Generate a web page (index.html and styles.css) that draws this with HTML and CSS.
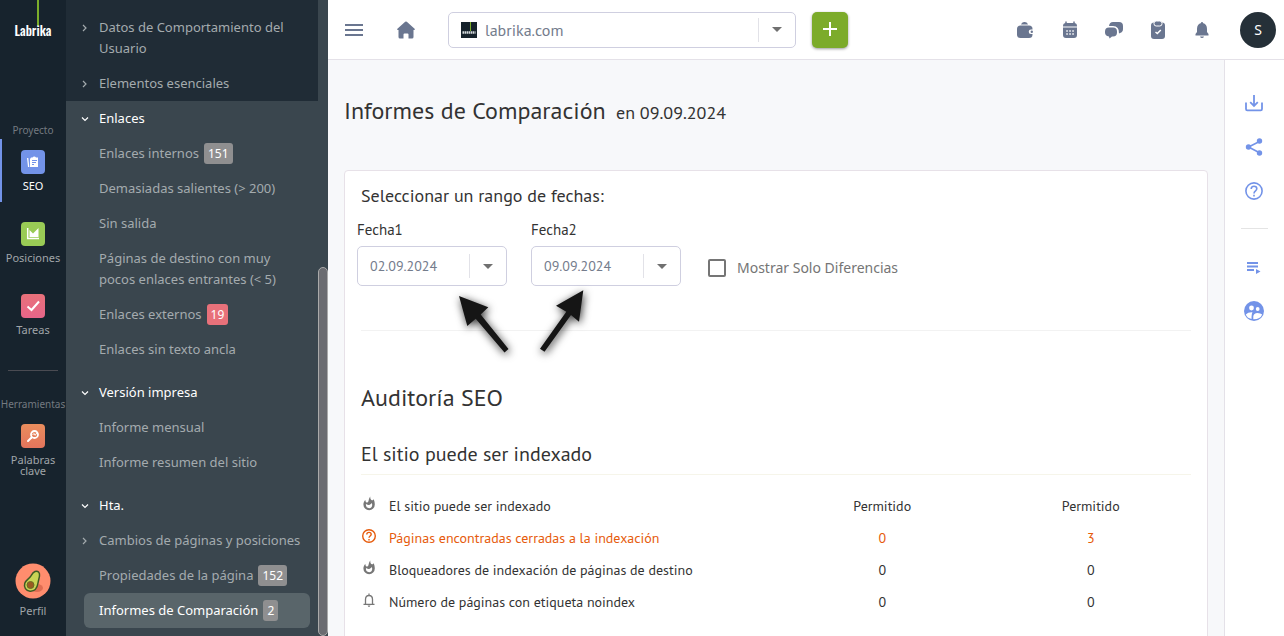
FILE: index.html
```html
<!DOCTYPE html>
<html lang="es">
<head>
<meta charset="utf-8">
<title>Labrika - Informes de Comparación</title>
<link rel="stylesheet" href="styles.css">
</head>
<body>
<div class="app">
  <nav class="rail" aria-label="Secciones">
    <a class="logo" href="#">Labrika</a>
    <span class="rail-title">Proyecto</span>
    <a class="rail-item active" href="#">
      <span class="tile blue"><svg viewBox="0 0 24 24" width="24" height="24"><path fill="#fff" d="M10 7.500h1.500a2 2 0 0 1 3.500 0h2V17h-8V9zM6 8h1.300l1 9H7z"/><path stroke="#7393e8" d="M11 10.500h5M11 12.500h4M11 14.500h2" fill="none"/></svg></span>
      <span>SEO</span>
    </a>
    <a class="rail-item" href="#">
      <span class="tile green"><svg viewBox="0 0 24 24" width="24" height="24"><path fill="none" stroke="#fff" stroke-width="1.500" d="M6.700 6v10.500H18"/><path fill="#fff" d="M8.500 15V8l3.500 3.500L17.500 6v9z"/></svg></span>
      <span>Posiciones</span>
    </a>
    <a class="rail-item" href="#">
      <span class="tile pink"><svg viewBox="0 0 24 24" width="24" height="24"><path fill="none" stroke="#fff" stroke-width="2" d="M6.500 12.500l4 3.500 7.500-8.500"/></svg></span>
      <span>Tareas</span>
    </a>
    <hr class="rail-line">
    <span class="rail-title">Herramientas</span>
    <a class="rail-item tools" href="#">
      <span class="tile orange"><svg viewBox="0 0 24 24" width="24" height="24"><circle cx="13.500" cy="10.500" r="3.500" fill="none" stroke="#fff" stroke-width="1.800"/><path fill="none" stroke="#fff" stroke-width="2" stroke-linecap="round" d="M10.500 13.500L7 17"/><path fill="none" stroke="#fff" d="M11.500 11l1.500-1.500 1.200 1.800 2-3"/></svg></span>
      <span>Palabras clave</span>
    </a>
    <a class="rail-item profile" href="#">
      <svg class="avocado" viewBox="0 0 36 36" width="36" height="36"><circle cx="18" cy="18" r="17.500" fill="#ff8d6e"/><ellipse cx="22" cy="25" rx="6" ry="4" fill="#e06d52"/><path fill="#c9d455" stroke="#3f5a24" stroke-width="1.500" d="M20 8.500c3-1 5 1 4.500 4.500-.5 3-1 4-1.500 7-1 6-4 8.500-8 8.200-4-.4-6.500-4-5.200-8 1.200-3.500 4.200-4 6-7 1-1.800 2-4 4.200-4.700z"/><circle cx="15.500" cy="22" r="3.500" fill="#9a5a23" stroke="#6c6a24"/></svg>
      <span>Perfil</span>
    </a>
  </nav>

  <aside class="sidebar">
    <div class="menu">
      <section class="group dark">
        <a class="item" href="#"><svg class="chev" viewBox="0 0 8 8"><path d="M2 1L5 4 2 7"/></svg>Datos de Comportamiento del Usuario</a>
        <a class="item" href="#"><svg class="chev" viewBox="0 0 8 8"><path d="M2 1L5 4 2 7"/></svg>Elementos esenciales</a>
      </section>
      <section class="group">
        <a class="item head" href="#"><svg class="chev" viewBox="0 0 8 8"><path d="M1 2.500L4 5.500 7 2.500"/></svg>Enlaces</a>
        <a class="item" href="#">Enlaces internos<span class="count">151</span></a>
        <a class="item" href="#">Demasiadas salientes (&gt; 200)</a>
        <a class="item" href="#">Sin salida</a>
        <a class="item" href="#">Páginas de destino con muy pocos enlaces entrantes (&lt; 5)</a>
        <a class="item" href="#">Enlaces externos<span class="count red">19</span></a>
        <a class="item" href="#">Enlaces sin texto ancla</a>
      </section>
      <section class="group">
        <a class="item head" href="#"><svg class="chev" viewBox="0 0 8 8"><path d="M1 2.500L4 5.500 7 2.500"/></svg>Versión impresa</a>
        <a class="item" href="#">Informe mensual</a>
        <a class="item" href="#">Informe resumen del sitio</a>
      </section>
      <section class="group">
        <a class="item head" href="#"><svg class="chev" viewBox="0 0 8 8"><path d="M1 2.500L4 5.500 7 2.500"/></svg>Hta.</a>
        <a class="item" href="#"><svg class="chev" viewBox="0 0 8 8"><path d="M2 1L5 4 2 7"/></svg>Cambios de páginas y posiciones</a>
        <a class="item" href="#">Propiedades de la página<span class="count">152</span></a>
        <a class="item current" href="#">Informes de Comparación<span class="count">2</span></a>
      </section>
    </div>
    <div class="scroll"><div class="thumb"></div></div>
  </aside>

  <div class="page">
    <header class="topbar">
      <button class="icon-btn menu-btn" aria-label="Menú"><svg viewBox="0 0 20 14" width="20" height="14"><path stroke="#6a7690" stroke-width="2" d="M1 2h18M1 7h18M1 12h18"/></svg></button>
      <button class="icon-btn home-btn" aria-label="Inicio"><svg viewBox="0 0 20 20" width="20" height="20"><path fill="#6a7690" d="M9.200 1.800q.8-.8 1.600 0l7.800 7q.8 1-.3 1.200H17.500V17q0 1.500-1.500 1.500h-3.500v-4q0-1-1-1h-3q-1 0-1 1v4H4Q2.500 18.500 2.500 17v-7H1.700q-1.100-.2-.3-1.200z"/></svg></button>
      <div class="select site">
        <svg class="favicon" viewBox="0 0 16 16" width="16" height="16"><path fill="#16222b" d="M0 0h16v16H0z"/><path stroke="#7cae2b" d="M9.500 0v9"/><path stroke="#d5dadd" stroke-width="2.500" stroke-dasharray="1.500 .5" d="M1.500 10.500h13"/></svg>
        <select aria-label="Sitio"><option>labrika.com</option></select>
        <svg class="caret" viewBox="0 0 10 5"><path d="M0 0h10L5 5z"/></svg>
      </div>
      <button class="add" aria-label="Añadir"><svg viewBox="0 0 16 16" width="16" height="16"><path stroke="#fff" stroke-width="2" d="M8 1v14M1 8h14"/></svg></button>
      <div class="actions">
        <button class="icon-btn" aria-label="Saldo"><svg viewBox="0 0 20 20" width="20" height="20"><path fill="#6a7690" d="M5 4.500q.7-2.500 3-2.500h1q2.500 0 3 2.500z"/><rect x="1" y="5.500" width="15.500" height="12.500" rx="3.500" fill="#6a7690"/><path fill="#fff" d="M17 9.500h-2a2 2 0 0 0 0 4.500h2z"/><circle cx="15.800" cy="11.800" r="1.200" fill="#6a7690"/></svg></button>
        <button class="icon-btn" aria-label="Calendario"><svg viewBox="0 0 20 20" width="20" height="20"><path stroke="#6a7690" stroke-width="1.500" d="M6 1.500v3M14 1.500v3"/><path fill="#6a7690" d="M3 6.500V6q0-3 3-3h8q3 0 3 3v.5zM3 7.500h14V15q0 3-3 3H6q-3 0-3-3z"/><path stroke="#fff" stroke-width="1.500" stroke-dasharray="1.500 1.500" d="M6.300 11h8M6.300 14h8"/></svg></button>
        <button class="icon-btn" aria-label="Mensajes"><svg viewBox="0 0 20 20" width="20" height="20"><path fill="#6a7690" d="M5 6q.5-4 4-4h6q4 0 4 4v3q0 3-3 4l-1 .5q.3-7.500-6-7.500z"/><path fill="#6a7690" d="M5 7.500h4q4 0 4 4v1q0 4-4 4H8l-2.500 2-.5-2q-4-.5-4-4v-1q0-4 4-4z"/></svg></button>
        <button class="icon-btn" aria-label="Tareas"><svg viewBox="0 0 20 20" width="20" height="20"><rect x="3" y="2.500" width="14" height="16.500" rx="3" fill="#6a7690"/><rect x="6" y="1" width="8" height="5" rx="2.200" fill="#6a7690" stroke="#fff"/><path fill="none" stroke="#fff" stroke-width="1.500" d="M7.500 12l1.800 1.500 3.500-3.500"/></svg></button>
        <button class="icon-btn" aria-label="Avisos"><svg viewBox="0 0 20 20" width="20" height="20"><path fill="#6a7690" d="M9.200 2h1.600v1Q15 4 15 9v3l1.500 2v1.500h-13V14L5 12V9q0-5 4.200-6zM8 16.500h4q-.5 1.500-2 1.500t-2-1.500z"/></svg></button>
        <button class="user">S</button>
      </div>
    </header>
    <div class="body">
      <main class="content">
        <h1 class="title">Informes de Comparación <small>en 09.09.2024</small></h1>
        <div class="panel">
          <form class="filters">
            <h2 class="range">Seleccionar un rango de fechas:</h2>
            <div class="fields">
              <div class="field">
                <label for="f1">Fecha1</label>
                <div class="select date"><select id="f1"><option>02.09.2024</option></select><svg class="caret" viewBox="0 0 10 5"><path d="M0 0h10L5 5z"/></svg></div>
              </div>
              <div class="field">
                <label for="f2">Fecha2</label>
                <div class="select date"><select id="f2"><option>09.09.2024</option></select><svg class="caret" viewBox="0 0 10 5"><path d="M0 0h10L5 5z"/></svg></div>
              </div>
              <label class="check"><input type="checkbox">Mostrar Solo Diferencias</label>
            </div>
            <svg class="arrows" viewBox="440 280 160 90" width="160" height="90" aria-hidden="true"><path d="M459 296l29.300 11.300-7.600 7.200L508.500 349l-4 3.500-28.800-33.800-8.400 7.300zM583.300 290.300L579 321.700l-8-6.700-26.500 36.700-4.500-3 26.300-37-10.300-6z"/></svg>
          </form>
          <h2 class="audit">Auditoría SEO</h2>
          <h3 class="block-title">El sitio puede ser indexado</h3>
          <table class="report">
            <colgroup><col class="c-icon"><col><col class="c-val"><col class="c-val"></colgroup>
            <tbody>
            <tr><td class="ic"><svg viewBox="0 0 16 16"><path fill="#777" fill-rule="evenodd" d="M9.300.5C9 3 10 4 11 4.300 11.800 4.500 12.400 3.800 12.400 3 13.400 4.500 13.800 6.500 13.800 8.500a5.700 5.700 0 0 1-11.400 0c0-2 .8-3.600 2-4.600 0 1.800.8 2.600 1.800 2.600C8 6.500 7.200 3 9.300.5zM10.800 7C9.500 8.500 8.500 9 7.500 9 6.300 9 5.500 8.500 5 7.800c-.5 2.500.8 4.400 3.200 4.400 2.700 0 3.600-2.700 2.600-5.200z"/></svg></td><th scope="row">El sitio puede ser indexado</th><td>Permitido</td><td>Permitido</td></tr>
            <tr class="warn"><td class="ic"><svg viewBox="0 0 16 16"><circle cx="8" cy="8" r="6.300" fill="none" stroke="#e65b0c" stroke-width="1.400"/><path fill="none" stroke="#e65b0c" stroke-width="1.400" d="M5.800 6.500C5.800 3.600 10.200 3.700 10.200 6.300 10.200 8 8 8 8 9.800M8 11v1.400"/></svg></td><th scope="row">Páginas encontradas cerradas a la indexación</th><td>0</td><td>3</td></tr>
            <tr><td class="ic"><svg viewBox="0 0 16 16"><path fill="#777" fill-rule="evenodd" d="M9.300.5C9 3 10 4 11 4.300 11.800 4.500 12.400 3.800 12.400 3 13.400 4.500 13.800 6.500 13.800 8.500a5.700 5.700 0 0 1-11.400 0c0-2 .8-3.600 2-4.600 0 1.800.8 2.600 1.800 2.600C8 6.500 7.200 3 9.300.5zM10.800 7C9.500 8.500 8.500 9 7.500 9 6.300 9 5.500 8.500 5 7.800c-.5 2.500.8 4.400 3.200 4.400 2.700 0 3.600-2.700 2.600-5.200z"/></svg></td><th scope="row">Bloqueadores de indexación de páginas de destino</th><td>0</td><td>0</td></tr>
            <tr><td class="ic"><svg viewBox="0 0 16 16"><path fill="none" stroke="#777" stroke-width="1.300" d="M4.500 12V7.500q0-4 3.500-4t3.500 4V12M2.500 12.300h11M8 3.500V1.500"/><path fill="#777" d="M6.600 13.500h2.800q-.3 1.400-1.400 1.400t-1.400-1.400z"/></svg></td><th scope="row">Número de páginas con etiqueta noindex</th><td>0</td><td>0</td></tr>
            </tbody>
          </table>
        </div>
      </main>
      <aside class="tools-bar">
        <button class="icon-btn" aria-label="Descargar"><svg viewBox="0 0 20 20" width="20" height="20"><path fill="none" stroke="#7393e8" stroke-width="1.800" d="M2 9.500V16q0 1.300 1.300 1.300h13.400q1.300 0 1.300-1.300V9.500M10 2v11M6.200 9.200l3.800 3.800 3.800-3.800"/></svg></button>
        <button class="icon-btn" aria-label="Compartir"><svg viewBox="0 0 20 20" width="20" height="20"><path fill="none" stroke="#7393e8" stroke-width="1.600" d="M15.500 4.500L4.500 10l11 5.800"/><g fill="#7393e8"><circle cx="15.500" cy="4" r="2.700"/><circle cx="4.500" cy="10" r="2.700"/><circle cx="15.500" cy="16" r="2.700"/></g></svg></button>
        <button class="icon-btn" aria-label="Ayuda"><svg viewBox="0 0 20 20" width="20" height="20"><circle cx="10" cy="10" r="8.100" fill="none" stroke="#7393e8" stroke-width="1.600"/><path fill="none" stroke="#7393e8" stroke-width="1.600" d="M7.200 8C7.200 4.300 12.800 4.500 12.800 7.800 12.800 9.900 10 9.800 10 12.400M10 13.700v1.700"/></svg></button>
        <hr>
        <button class="icon-btn" aria-label="Lista"><svg viewBox="0 0 20 20" width="20" height="20"><path stroke="#7393e8" stroke-width="1.800" d="M3 6h11M3 9.500h11M3 13h7"/><path fill="#7393e8" d="M12 12l4.500 2.500L12 17z"/></svg></button>
        <button class="icon-btn" aria-label="Equipo"><svg viewBox="0 0 20 20" width="20" height="20"><circle cx="10" cy="10" r="10" fill="#7393e8"/><g fill="#fff"><circle cx="7.500" cy="7" r="2.400"/><circle cx="13.700" cy="8" r="1.900"/><path d="M1.800 13.500Q4 11 8.500 11.300 7.500 13 7.500 18 3 17 1.800 13.500zM9.300 18.300v-3q.3-3 4.200-3.300 3 0 4.700 1.500-2 5-8.900 4.800z"/></g></svg></button>
      </aside>
    </div>
  </div>
</div>
</body>
</html>
```
FILE: styles.css
```css
* { box-sizing: border-box; }
body { margin: 0; background: #f7f8fa; color: #333; font: 13px/21px "Noto Sans", sans-serif; }
a { color: inherit; text-decoration: none; }
button { font: inherit; border: 0; background: none; padding: 0; cursor: pointer; }
h1, h2, h3 { margin: 0; font-weight: 400; }
svg { display: block; flex: none; }
.app { display: flex; height: 100vh; overflow: hidden; }

.rail { width: 66px; flex: none; background: #17232d; color: #a0a5a9; display: flex; flex-direction: column; align-items: center; font-size: 11px; line-height: 16px; padding-bottom: 17px; }
.logo { width: 44px; height: 44px; padding-top: 22px; background: linear-gradient(#7cae2b, #7cae2b) 26px 0 / 2px 26px no-repeat; color: #fff; font: 500 13px/16px Oswald, "PT Sans Narrow", "Liberation Sans Narrow", Roboto, sans-serif; text-align: center; margin-bottom: 78px; }
.rail-title { color: #747a80; font-size: 10px; margin-bottom: 1px; }
.rail-item { width: 100%; height: 63px; padding-top: 11px; display: flex; flex-direction: column; align-items: center; gap: 4px; margin-bottom: 9px; text-align: center; }
.rail-item.active { color: #fff; box-shadow: inset 2px 0 #7393e8; }
.rail-item.tools { line-height: 11px; gap: 6px; }
.tile { width: 24px; height: 24px; border-radius: 4px; }
.blue { background: #7393e8; }
.green { background: #99cb55; }
.pink { background: linear-gradient(#e8717a, #e76589); }
.orange { background: linear-gradient(#e98d5d, #e3745c); }
.rail-line { width: 50px; margin: 15px 0 25px; border: 0; border-top: 1px solid #4a4b52; }
.profile { margin: auto 0 0; height: auto; padding: 0; }

.sidebar { width: 262px; flex: none; display: flex; background: #3a464e; color: #a4abae; }
.menu { flex: 1; min-width: 0; }
.group { padding: 0 8px 8px 18px; }
.group.dark { background: #202c36; padding-top: 10px; padding-bottom: 0; }
.item { display: block; position: relative; padding: 7px 6px 7px 15px; border-radius: 6px; }
.head, .current { color: #fff; }
.current { background: #59656a; }
.chev { position: absolute; left: -3px; top: 14px; width: 8px; height: 8px; fill: none; stroke: currentColor; stroke-width: 1.2; }
.count { display: inline-block; margin-left: 5px; padding: 0 4px; border-radius: 3px; background: #8f8f90; color: #fff; font-size: 12px; }
.count.red { background: #e8717a; }
.scroll { width: 10px; background: #3a464e; padding-top: 267px; display: flex; }
.thumb { flex: 1; border: 1px solid #aaa; border-radius: 5px; background: #6b6c71; }

.page { flex: 1; min-width: 0; display: flex; flex-direction: column; }
.topbar { height: 60px; flex: none; display: flex; align-items: center; padding: 0 8px 0 16px; background: #fff; border-bottom: 1px solid #e4e1e8; }
.icon-btn { display: flex; justify-content: center; align-items: center; width: 20px; height: 20px; }
.home-btn { margin: 0 32px; }
.select { position: relative; display: flex; align-items: center; border: 1px solid #cfcfe0; border-radius: 5px; background: #fff; }
.select select { appearance: none; border: 0; outline: 0; background: none; width: 100%; height: 100%; color: #747c8c; font: 14px/20px "PT Sans", "Noto Sans", sans-serif; padding: 0 48px 0 12px; }
.select::after { content: ""; position: absolute; right: 36px; top: 5px; bottom: 5px; border-left: 1px solid #e2e2e8; }
.date::after { top: 7px; bottom: 7px; }
.caret { position: absolute; right: 13px; width: 10px; height: 5px; fill: #707070; pointer-events: none; }
.site { width: 348px; height: 36px; }
.site select { font-size: 16px; padding-left: 36px; }
.favicon { position: absolute; left: 12px; }
.add { width: 36px; height: 36px; margin-left: 16px; border-radius: 5px; background: #7cab2a; box-shadow: 0 1px 3px #0006; display: flex; align-items: center; justify-content: center; }
.add svg { margin-bottom: 2px; }
.actions { margin-left: auto; display: flex; align-items: center; gap: 24px; }
.user { width: 36px; height: 36px; border-radius: 50%; background: #253038; color: #fff; font-size: 14px; margin-left: 4px; }

.body { flex: 1; min-height: 0; display: flex; }
.content { flex: 1; min-width: 0; padding: 34px 16px 0; overflow: hidden; font-family: "PT Sans", "Noto Sans", sans-serif; }
.title { font-size: 24px; line-height: 34px; margin-bottom: 42px; height: 34px; }
.title small { font-size: 18px; margin-left: 4px; }
.panel { background: #fff; border: 1px solid #e7e1e8; border-radius: 4px; padding: 13px 16px 200px; }
.filters { position: relative; border-bottom: 1px solid #f2f2f2; padding-bottom: 44px; }
.range { font-size: 18px; line-height: 24px; }
.fields { display: flex; align-items: flex-end; gap: 24px; margin: 12px 0 0 -4px; }
.field { width: 150px; }
.field label { display: block; font-size: 15px; line-height: 20px; margin-bottom: 6px; }
.date { height: 40px; }
.check { display: flex; align-items: center; gap: 11px; height: 36px; margin-left: 3px; color: #757575; font: 14px/20px "Noto Sans", sans-serif; }
.check input { appearance: none; margin: 0; width: 18px; height: 18px; border: 2px solid #757575; border-radius: 2px; background: #fff; }
.arrows { position: absolute; left: 79px; top: 96px; fill: #151515; filter: drop-shadow(1px 2px 4px #000c); pointer-events: none; }
.audit { font-size: 24px; line-height: 32px; margin-top: 51px; }
.block-title { font-size: 20px; line-height: 28px; margin-top: 26px; padding-bottom: 6px; border-bottom: 1px solid #f6f5ea; }
.report { width: calc(100% + 4px); table-layout: fixed; border-collapse: collapse; margin-top: 15px; font-size: 14px; line-height: 20px; }
.report td, .report th { padding: 6px 0; height: 32px; text-align: center; font-weight: 400; }
.report th { text-align: left; }
.c-icon { width: 28px; }
.c-val { width: 25%; }
.report .ic { vertical-align: top; }
.ic svg { width: 16px; height: 16px; }
.warn { color: #e65b0c; }

.tools-bar { width: 60px; flex: none; background: #fff; border-left: 1px solid #e4e1e8; padding: 33px 1px 0 0; display: flex; flex-direction: column; align-items: center; gap: 24px; }
.tools-bar hr { width: 27px; border: 0; border-top: 1px solid #e4e4e4; margin: 3px 0 4px; }
```
